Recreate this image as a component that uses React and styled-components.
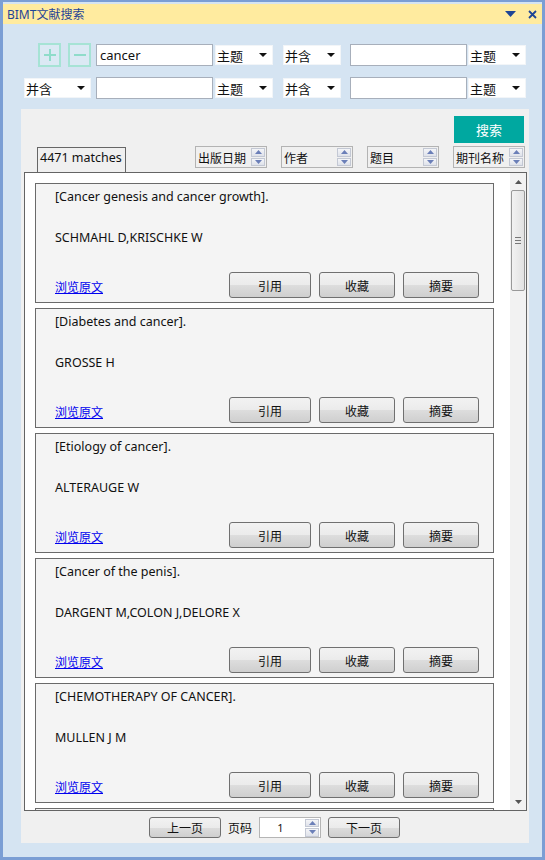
import styled, { createGlobalStyle } from "styled-components";

const GlobalStyle = createGlobalStyle`
  html, body {
    margin: 0;
    padding: 0;
    background: #d5e4f2;
  }
  * {
    box-sizing: border-box;
  }
`;

const results = [
  { title: "[Cancer genesis and cancer growth].", author: "SCHMAHL D,KRISCHKE W" },
  { title: "[Diabetes and cancer].", author: "GROSSE H" },
  { title: "[Etiology of cancer].", author: "ALTERAUGE W" },
  { title: "[Cancer of the penis].", author: "DARGENT M,COLON J,DELORE X" },
  { title: "[CHEMOTHERAPY OF CANCER].", author: "MULLEN J M" },
  null,
];

const sorts = ["出版日期", "作者", "题目", "期刊名称"];

function Spinner() {
  return (
    <SpinBox>
      <SpinHalf>
        <svg width="7" height="4" viewBox="0 0 7 4">
          <path d="M0 4 L3.5 0 L7 4 Z" fill="#6b7fb8" />
        </svg>
      </SpinHalf>
      <SpinHalf>
        <svg width="7" height="4" viewBox="0 0 7 4">
          <path d="M0 0 L3.5 4 L7 0 Z" fill="#6b7fb8" />
        </svg>
      </SpinHalf>
    </SpinBox>
  );
}

function Dropdown({ label, $w = 58 }) {
  return (
    <Select $w={$w}>
      <span>{label}</span>
      <svg width="8" height="4" viewBox="0 0 8 4">
        <path d="M0 0 L8 0 L4 4 Z" fill="#111" />
      </svg>
    </Select>
  );
}

export default function App() {
  return (
    <>
      <GlobalStyle />
      <Window>
        <TitleBar>
          <TitleText>BIMT文献搜索</TitleText>
          <TitleIcons>
            <svg width="11" height="6" viewBox="0 0 11 6">
              <path d="M0 0 L11 0 L5.5 6 Z" fill="#1e4595" />
            </svg>
            <svg width="9" height="9" viewBox="0 0 9 9">
              <path d="M1 1 L8 8 M8 1 L1 8" stroke="#1e4595" strokeWidth="1.8" />
            </svg>
          </TitleIcons>
        </TitleBar>
        <Body>
          <Query>
            <QueryRow>
              <LeadCell>
                <SquareBtn>
                  <svg width="14" height="14" viewBox="0 0 14 14">
                    <path d="M7 1 V13 M1 7 H13" stroke="#8fdcca" strokeWidth="2" />
                  </svg>
                </SquareBtn>
                <SquareBtn>
                  <svg width="14" height="14" viewBox="0 0 14 14">
                    <path d="M1 7 H13" stroke="#8fdcca" strokeWidth="2" />
                  </svg>
                </SquareBtn>
              </LeadCell>
              <TextBox>cancer</TextBox>
              <Dropdown label="主题" />
              <Dropdown label="并含" />
              <TextBox />
              <Dropdown label="主题" />
            </QueryRow>
            <QueryRow>
              <LeadCell>
                <Dropdown label="并含" $w={67} />
              </LeadCell>
              <TextBox />
              <Dropdown label="主题" />
              <Dropdown label="并含" />
              <TextBox />
              <Dropdown label="主题" />
            </QueryRow>
          </Query>
          <Panel>
            <SearchRow>
              <SearchButton>搜索</SearchButton>
            </SearchRow>
            <Toolbar>
              <Matches>4471 matches</Matches>
              <SortGroup>
                {sorts.map((s) => (
                  <SortBox key={s}>
                    <span>{s}</span>
                    <Spinner />
                  </SortBox>
                ))}
              </SortGroup>
            </Toolbar>
            <List>
              <Cards>
                {results.map((r, i) =>
                  r ? (
                    <Card key={i}>
                      <CardTitle>{r.title}</CardTitle>
                      <CardAuthor>{r.author}</CardAuthor>
                      <CardFooter>
                        <Link href="#">浏览原文</Link>
                        <Actions>
                          <ActionButton $w={82}>引用</ActionButton>
                          <ActionButton $w={76}>收藏</ActionButton>
                          <ActionButton $w={76}>摘要</ActionButton>
                        </Actions>
                      </CardFooter>
                    </Card>
                  ) : (
                    <Card key={i} />
                  )
                )}
              </Cards>
              <ScrollBar>
                <ScrollArrow>
                  <svg width="7" height="4" viewBox="0 0 7 4">
                    <path d="M0 4 L3.5 0 L7 4 Z" fill="#555" />
                  </svg>
                </ScrollArrow>
                <Thumb>
                  <Grip />
                </Thumb>
                <ScrollTrack />
                <ScrollArrow>
                  <svg width="7" height="4" viewBox="0 0 7 4">
                    <path d="M0 0 L3.5 4 L7 0 Z" fill="#555" />
                  </svg>
                </ScrollArrow>
              </ScrollBar>
            </List>
            <Pager>
              <PageButton>上一页</PageButton>
              <PageLabel>页码</PageLabel>
              <PageInput>
                <PageValue>1</PageValue>
                <Spinner />
              </PageInput>
              <PageButton>下一页</PageButton>
            </Pager>
          </Panel>
        </Body>
      </Window>
    </>
  );
}

const Window = styled.div`
  width: 545px;
  height: 860px;
  display: flex;
  flex-direction: column;
  border: 2px solid #7b9ed4;
  border-left-width: 3px;
  border-right-width: 3px;
  border-bottom-width: 3px;
  padding-top: 2px;
  background: #d5e4f2;
  font-family: "Noto Sans", "Noto Sans CJK SC", sans-serif;
  font-size: 12px;
  color: #111;
`;

const TitleBar = styled.div`
  height: 20px;
  flex-shrink: 0;
  display: flex;
  align-items: center;
  justify-content: space-between;
  background: #ffeb9f;
  padding: 0 5px 0 4px;
`;

const TitleText = styled.div`
  color: #1f4496;
  font-size: 12px;
`;

const TitleIcons = styled.div`
  display: flex;
  align-items: center;
  gap: 12px;
`;

const Body = styled.div`
  flex: 1;
  display: flex;
  flex-direction: column;
  padding: 0 13px 14px 18px;
`;

const Query = styled.div`
  display: flex;
  flex-direction: column;
  gap: 10px;
  padding-top: 19px;
`;

const QueryRow = styled.div`
  display: grid;
  grid-template-columns: 75px 119px 68px 67px 118px 58px;
  align-items: center;
`;

const LeadCell = styled.div`
  display: flex;
  justify-content: flex-end;
  gap: 7px;
  padding-right: 5px;
`;

const SquareBtn = styled.div`
  width: 23px;
  height: 24px;
  border: 2px solid #a6e3d5;
  display: flex;
  align-items: center;
  justify-content: center;
  background: #dbe9f4;
`;

const TextBox = styled.div`
  width: 117px;
  height: 22px;
  border: 1px solid #a7afbb;
  background: #fff;
  font-size: 13px;
  line-height: 20px;
  padding-left: 3px;
  color: #111;
`;

const Select = styled.div`
  width: ${(p) => p.$w}px;
  height: 20px;
  background: #fff;
  border: 1px solid #f2f5f8;
  display: flex;
  align-items: center;
  justify-content: space-between;
  padding: 0 5px 0 1px;
  font-family: "Noto Sans CJK SC", sans-serif;
  font-size: 13px;
`;

const Panel = styled.div`
  margin-top: 10px;
  background: #f0f0f0;
  display: flex;
  flex-direction: column;
  padding: 7px 2px 5px 3px;
`;

const SearchRow = styled.div`
  display: flex;
  justify-content: flex-end;
  padding-right: 3px;
`;

const SearchButton = styled.div`
  width: 70px;
  height: 27px;
  background: #00a8a0;
  color: #fff;
  display: flex;
  align-items: center;
  justify-content: center;
  font-family: "Noto Sans CJK SC", sans-serif;
  font-size: 13px;
`;

const Toolbar = styled.div`
  margin-top: 3px;
  display: flex;
  align-items: flex-start;
  justify-content: space-between;
  padding: 0 2px 0 13px;
`;

const Matches = styled.div`
  margin-top: 1px;
  height: 25px;
  width: 89px;
  border: 1px solid #666;
  border-bottom: none;
  padding: 2px 0 0 2px;
  line-height: 16px;
  font-size: 12.5px;
`;

const SortGroup = styled.div`
  display: flex;
  gap: 14px;
`;

const SortBox = styled.div`
  width: 72px;
  height: 22px;
  border: 1px solid #b3b3b3;
  display: flex;
  align-items: center;
  justify-content: space-between;
  padding: 0 1px 0 2px;
  font-family: "Noto Sans CJK SC", sans-serif;
  font-size: 12px;
`;

const SpinBox = styled.div`
  width: 14px;
  height: 18px;
  display: flex;
  flex-direction: column;
  gap: 1px;
`;

const SpinHalf = styled.div`
  flex: 1;
  background: linear-gradient(#f4f5f8, #dfe2ea);
  border: 1px solid #c3c8d4;
  display: flex;
  align-items: center;
  justify-content: center;
`;

const List = styled.div`
  height: 639px;
  border: 1px solid #646464;
  background: #fff;
  display: flex;
  overflow: hidden;
`;

const Cards = styled.div`
  flex: 1;
  display: flex;
  flex-direction: column;
  gap: 5px;
  padding: 10px 0 0 10px;
  overflow: hidden;
`;

const Card = styled.div`
  flex-shrink: 0;
  width: 459px;
  height: 120px;
  border: 1px solid #6a6a6a;
  background: #f4f4f4;
  display: flex;
  flex-direction: column;
  padding: 5px 14px 4px 19px;
  font-size: 12.5px;
`;

const CardTitle = styled.div`
  line-height: 16px;
  height: 16px;
`;

const CardAuthor = styled.div`
  margin-top: 25px;
  line-height: 16px;
  height: 16px;
`;

const CardFooter = styled.div`
  margin-top: auto;
  display: flex;
  align-items: center;
  justify-content: space-between;
`;

const Link = styled.a`
  color: #0000ee;
  text-decoration: underline;
  font-family: "Noto Sans CJK SC", sans-serif;
  font-size: 12px;
  margin-top: 2px;
`;

const Actions = styled.div`
  display: flex;
  gap: 8px;
`;

const ActionButton = styled.div`
  width: ${(p) => p.$w}px;
  height: 26px;
  border: 1px solid #707070;
  border-radius: 3px;
  background: linear-gradient(#f2f2f2 0%, #ebebeb 50%, #dddddd 51%, #cfcfcf 100%);
  display: flex;
  align-items: center;
  justify-content: center;
  font-family: "Noto Sans CJK SC", sans-serif;
  font-size: 12px;
`;

const ScrollBar = styled.div`
  width: 16px;
  flex-shrink: 0;
  background: #f2f2f2;
  display: flex;
  flex-direction: column;
  align-items: center;
`;

const ScrollArrow = styled.div`
  height: 17px;
  width: 100%;
  display: flex;
  align-items: center;
  justify-content: center;
`;

const Thumb = styled.div`
  width: 14px;
  height: 101px;
  border: 1px solid #999;
  border-radius: 2px;
  background: linear-gradient(90deg, #f2f2f2, #e2e2e2);
  display: flex;
  align-items: center;
  justify-content: center;
`;

const Grip = styled.div`
  width: 6px;
  height: 7px;
  border-top: 1px solid #777;
  border-bottom: 1px solid #777;
  background: linear-gradient(#777, #777) center / 6px 1px no-repeat;
`;

const ScrollTrack = styled.div`
  flex: 1;
`;

const Pager = styled.div`
  margin-top: 6px;
  display: flex;
  align-items: center;
  justify-content: center;
  gap: 7px;
  padding-right: 2px;
`;

const PageButton = styled.div`
  width: 72px;
  height: 21px;
  border: 1px solid #707070;
  border-radius: 3px;
  background: linear-gradient(#f2f2f2 0%, #ebebeb 50%, #dddddd 51%, #cfcfcf 100%);
  display: flex;
  align-items: center;
  justify-content: center;
  font-family: "Noto Sans CJK SC", sans-serif;
  font-size: 12px;
`;

const PageLabel = styled.span`
  font-family: "Noto Sans CJK SC", sans-serif;
  font-size: 12px;
`;

const PageInput = styled.div`
  width: 62px;
  height: 21px;
  border: 1px solid #b5b5b5;
  background: #fff;
  display: flex;
  align-items: center;
  justify-content: space-between;
  padding: 0 1px 0 0;
`;

const PageValue = styled.span`
  flex: 1;
  text-align: center;
  font-size: 11px;
  padding-right: 4px;
`;
